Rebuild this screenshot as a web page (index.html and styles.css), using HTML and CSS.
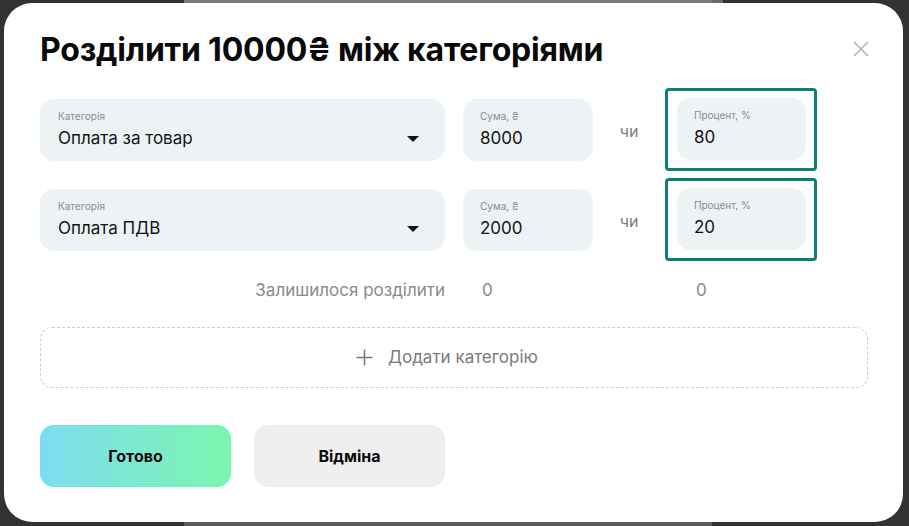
FILE: index.html
```html
<!DOCTYPE html>
<html lang="uk">
<head>
<meta charset="utf-8">
<title>Розділити між категоріями</title>
<link rel="stylesheet" href="styles.css">
</head>
<body>
<div class="modal">
  <div class="head">
    <h1 class="title">Розділити 10000₴ між категоріями</h1>
    <button class="close" aria-label="Закрити">
      <svg width="16" height="16" viewBox="0 0 16 16"><path d="M1 1L15 15M15 1L1 15" stroke="#b3b3b3" stroke-width="1.6" fill="none"/></svg>
    </button>
  </div>

  <div class="rows">
    <div class="row">
      <div class="field cat">
        <div class="label">Категорія</div>
        <div class="value">Оплата за товар</div>
        <span class="caret"></span>
      </div>
      <div class="field sum">
        <div class="label">Сума, ₴</div>
        <div class="value">8000</div>
      </div>
      <div class="or">чи</div>
      <div class="focus">
        <div class="field pct">
          <div class="label">Процент, %</div>
          <div class="value">80</div>
        </div>
      </div>
    </div>
    <div class="row">
      <div class="field cat">
        <div class="label">Категорія</div>
        <div class="value">Оплата ПДВ</div>
        <span class="caret"></span>
      </div>
      <div class="field sum">
        <div class="label">Сума, ₴</div>
        <div class="value">2000</div>
      </div>
      <div class="or">чи</div>
      <div class="focus">
        <div class="field pct">
          <div class="label">Процент, %</div>
          <div class="value">20</div>
        </div>
      </div>
    </div>
  </div>

  <div class="rest">
    <div class="rest-label">Залишилося розділити</div>
    <div class="rest-sum">0</div>
    <div class="rest-pct">0</div>
  </div>

  <button class="add">
    <svg width="17" height="17" viewBox="0 0 17 17"><path d="M8.5 0.5V16.5M0.5 8.5H16.5" stroke="#7a7a7a" stroke-width="1.6" fill="none"/></svg>
    <span>Додати категорію</span>
  </button>

  <div class="actions">
    <button class="btn primary">Готово</button>
    <button class="btn secondary">Відміна</button>
  </div>
</div>
</body>
</html>
```

FILE: styles.css
```css
* { box-sizing: border-box; }
html, body { margin: 0; padding: 0; }
body {
  width: 909px;
  height: 526px;
  overflow: hidden;
  font-family: Inter, "Noto Sans", "Liberation Sans", sans-serif;
  color: #111;
  background:
    linear-gradient(to right, transparent 184px, #7a7a7a 184px, #7a7a7a 712px, #6a6a6a 712px, #6a6a6a 723px, transparent 723px) top / 100% 4px no-repeat,
    linear-gradient(to right, transparent 184px, #5c5c5c 184px, #5c5c5c 712px, transparent 712px) bottom / 100% 4px no-repeat,
    #323232;
  padding: 3px 6px 4px 4px;
}
.modal {
  width: 899px;
  height: 519px;
  background: #fff;
  border-radius: 28px;
  padding: 27px 34px 0 36px;
}
.head {
  display: flex;
  justify-content: space-between;
  align-items: flex-start;
}
.title {
  margin: 0;
  font-size: 32px;
  line-height: 40px;
  font-weight: 700;
  letter-spacing: -0.2px;
  color: #0a0a0a;
}
.close {
  border: 0;
  background: none;
  padding: 0;
  margin: 11px 0 0 0;
  width: 16px;
  height: 16px;
  cursor: pointer;
}
.rows {
  margin-top: 18px;
  display: flex;
  flex-direction: column;
  gap: 7px;
}
.row {
  display: flex;
  align-items: center;
}
.field {
  position: relative;
  height: 62px;
  background: #edf2f4;
  border-radius: 14px;
  padding: 11px 17px 0 17px;
}
.label {
  font-size: 10px;
  line-height: 12px;
  color: #8b8b8b;
}
.value {
  margin-top: 5px;
  font-size: 17px;
  line-height: 22px;
  color: #141414;
}
.cat { width: 405px; margin-right: 18px; padding-left: 18px; }
.sum { width: 130px; }
.pct { width: 129px; }
.caret {
  position: absolute;
  right: 26px;
  top: 37px;
  width: 0;
  height: 0;
  border-left: 6px solid transparent;
  border-right: 6px solid transparent;
  border-top: 6px solid #141414;
}
.or {
  width: 72px;
  text-align: center;
  font-size: 16px;
  color: #7c7c7c;
  margin-top: 2px;
}
.focus {
  border: 3px solid #0e7f77;
  border-radius: 4px;
  padding: 7px 8px 8px 9px;
}
.rest {
  display: flex;
  margin-top: 19px;
  font-size: 17px;
  line-height: 20px;
  color: #8a8a8a;
}
.rest-label { width: 405px; text-align: right; }
.rest-sum { width: 237px; padding-left: 37px; }
.rest-pct { padding-left: 14px; }
.add {
  margin-top: 27px;
  width: 828px;
  height: 61px;
  border: 1px dashed #cfcfcf;
  border-radius: 12px;
  background: #fff;
  display: flex;
  align-items: center;
  justify-content: center;
  gap: 15px;
  font-family: inherit;
  font-size: 17px;
  color: #7a7a7a;
  padding: 0 14px 0 0;
}
.add span { margin-top: -1px; }
.actions {
  display: flex;
  gap: 23px;
  margin-top: 37px;
}
.btn {
  width: 191px;
  height: 62px;
  border: 0;
  border-radius: 14px;
  font-family: inherit;
  font-size: 16px;
  font-weight: 700;
  color: #0a0a0a;
}
.primary { background: linear-gradient(90deg, #7ddcf1 0%, #7cf6ad 100%); }
.secondary { background: #efefef; }
```
